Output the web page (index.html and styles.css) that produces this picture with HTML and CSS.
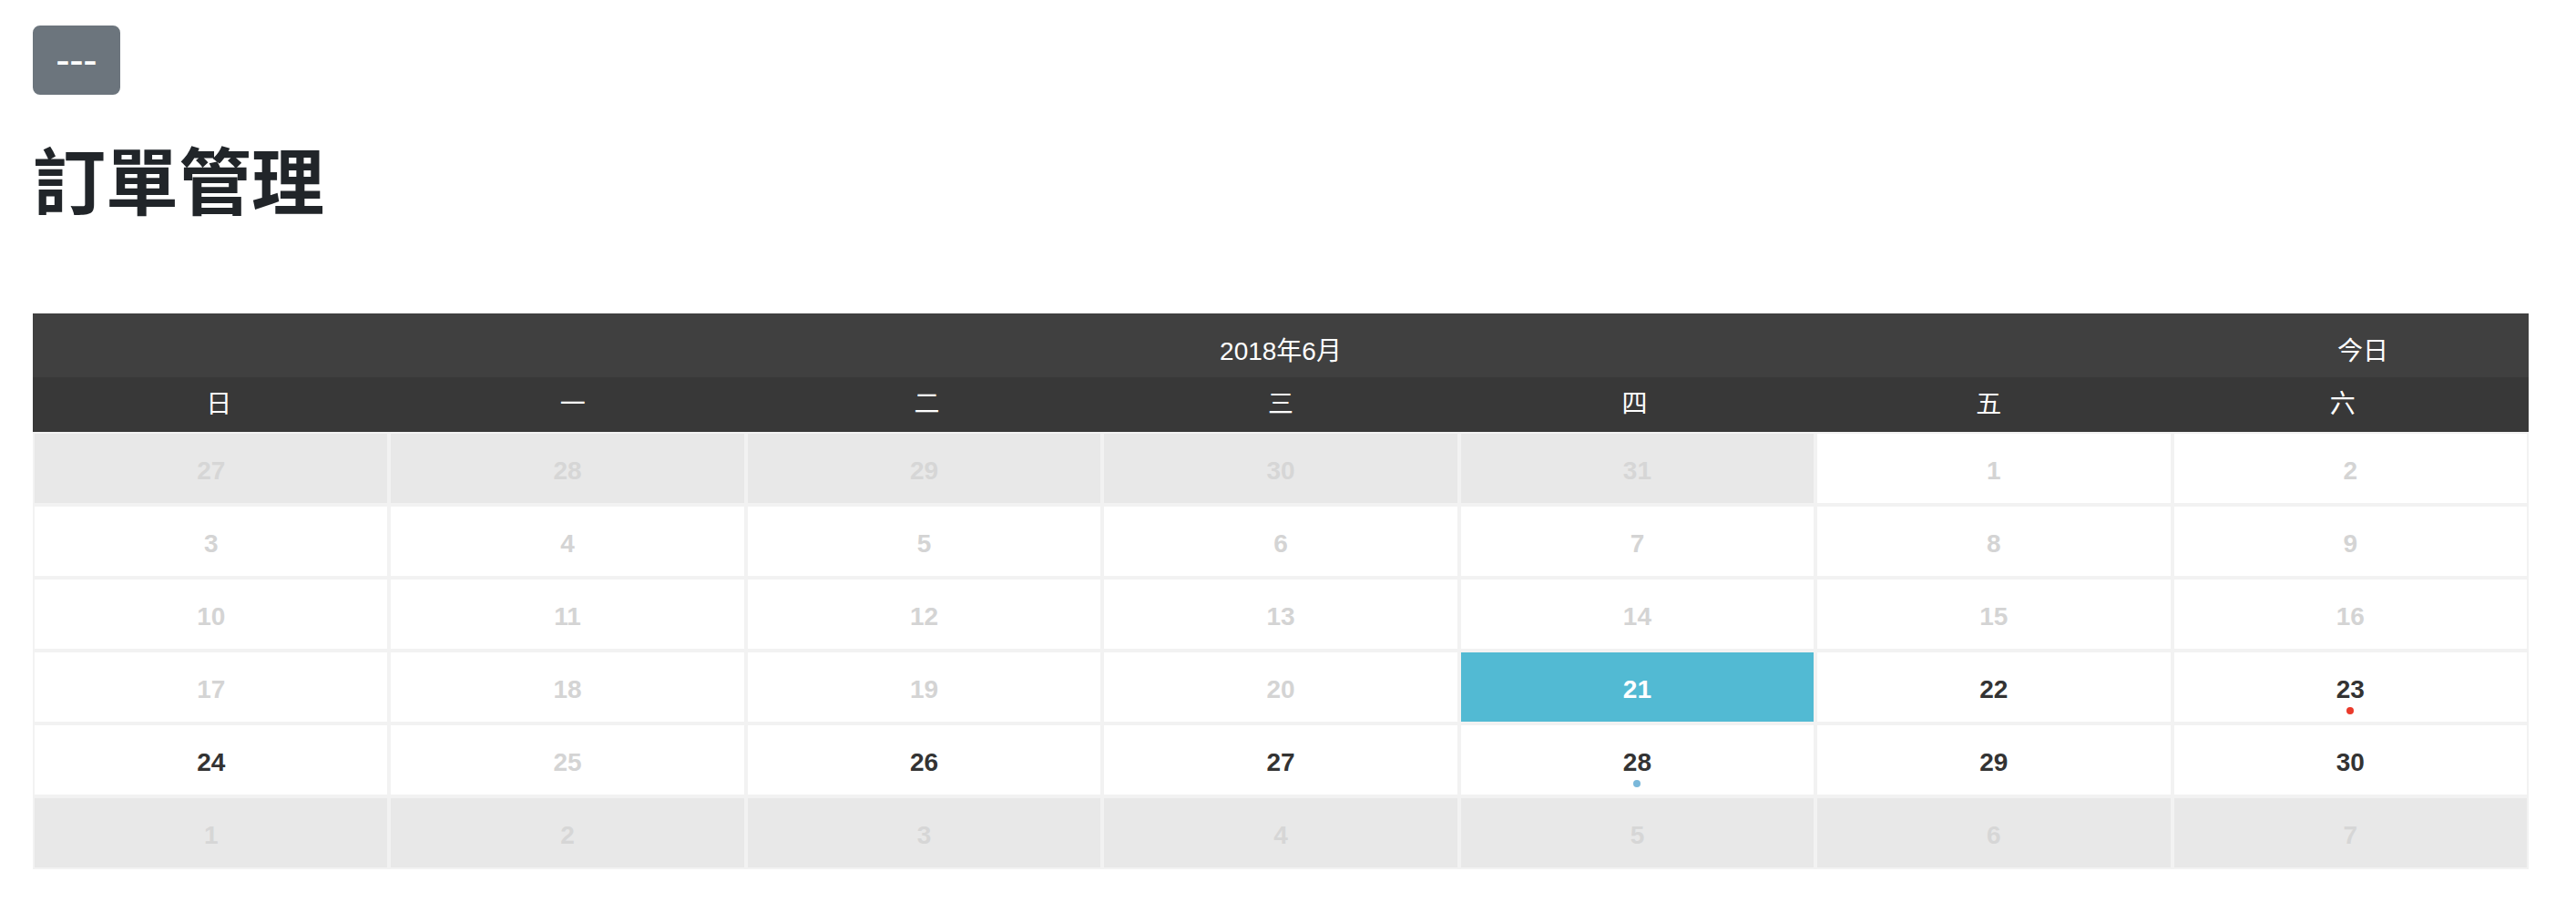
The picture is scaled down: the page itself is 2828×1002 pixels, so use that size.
FILE: index.html
```html
<!DOCTYPE html>
<html lang="zh-Hant">
<head>
<meta charset="utf-8">
<title>訂單管理</title>
<link rel="stylesheet" href="styles.css">
</head>
<body>
<div class="page">
  <button class="btn"><span class="btn-label">---</span></button>
  <h1 class="title">訂單管理</h1>
  <div class="calendar">
    <div class="cal-header">
      <span class="cal-spacer"></span>
      <span class="cal-title">2018年6月</span>
      <span class="cal-today">今日</span>
    </div>
    <div class="cal-weekdays">
      <span>日</span><span>一</span><span>二</span><span>三</span><span>四</span><span>五</span><span>六</span>
    </div>
    <div class="cal-body">
      <div class="day other">27</div>
      <div class="day other">28</div>
      <div class="day other">29</div>
      <div class="day other">30</div>
      <div class="day other">31</div>
      <div class="day past">1</div>
      <div class="day past">2</div>

      <div class="day past">3</div>
      <div class="day past">4</div>
      <div class="day past">5</div>
      <div class="day past">6</div>
      <div class="day past">7</div>
      <div class="day past">8</div>
      <div class="day past">9</div>

      <div class="day past">10</div>
      <div class="day past">11</div>
      <div class="day past">12</div>
      <div class="day past">13</div>
      <div class="day past">14</div>
      <div class="day past">15</div>
      <div class="day past">16</div>

      <div class="day past">17</div>
      <div class="day past">18</div>
      <div class="day past">19</div>
      <div class="day past">20</div>
      <div class="day today">21</div>
      <div class="day">22</div>
      <div class="day">23<span class="dot dot-red"></span></div>

      <div class="day">24</div>
      <div class="day past">25</div>
      <div class="day">26</div>
      <div class="day">27</div>
      <div class="day">28<span class="dot dot-blue"></span></div>
      <div class="day">29</div>
      <div class="day">30</div>

      <div class="day other">1</div>
      <div class="day other">2</div>
      <div class="day other">3</div>
      <div class="day other">4</div>
      <div class="day other">5</div>
      <div class="day other">6</div>
      <div class="day other">7</div>
    </div>
  </div>
</div>
</body>
</html>
```

FILE: styles.css
```css
html, body {
  margin: 0;
  padding: 0;
  background: #ffffff;
}

body {
  font-family: "Liberation Sans", "Noto Sans CJK TC", sans-serif;
  color: #212529;
}

.page {
  padding: 28px 0 0 36px;
}

.btn {
  display: block;
  margin: 0;
  padding: 12px 24px;
  background: #6c757d;
  border: 2px solid #6c757d;
  border-radius: 8px;
  color: #ffffff;
  font-family: "Liberation Sans", sans-serif;
  font-size: 32px;
  font-weight: 700;
  line-height: 48px;
}

.btn-label {
  display: inline-block;
  width: 44px;
  text-align: center;
  transform: scaleX(1.4);
}

.title {
  margin: 42px 0 0;
  font-family: "Noto Sans CJK TC", sans-serif;
  font-weight: 700;
  font-size: 80px;
  line-height: 96px;
  color: #212529;
}

.calendar {
  width: 2740px;
  margin-top: 102px;
}

.cal-header {
  display: grid;
  grid-template-columns: 1fr auto 1fr;
  align-items: start;
  height: 70px;
  box-sizing: border-box;
  padding-top: 14px;
  background: #404040;
  color: #ffffff;
  font-size: 28px;
  line-height: 56px;
}

.cal-today {
  justify-self: end;
  padding-right: 154px;
}

.cal-weekdays {
  display: grid;
  grid-template-columns: repeat(7, 1fr);
  padding: 0 10px;
  height: 60px;
  background: #383838;
  color: #ffffff;
  font-size: 28px;
  line-height: 60px;
  text-align: center;
}

.cal-body {
  display: grid;
  grid-template-columns: repeat(7, 1fr);
}

.day {
  position: relative;
  box-sizing: border-box;
  height: 80px;
  border: 2px solid #f2f2f2;
  padding-top: 5px;
  display: flex;
  align-items: center;
  justify-content: center;
  background: #ffffff;
  color: #333333;
  font-weight: 700;
  font-size: 28px;
}

.day.past {
  color: #d4d4d4;
}

.day.other {
  background: #e8e8e8;
  color: #d6d6d6;
}

.day.today {
  background: #52bad3;
  color: #ffffff;
}

.dot {
  position: absolute;
  top: 60px;
  left: 50%;
  width: 8px;
  height: 8px;
  margin-left: -4px;
  border-radius: 50%;
}

.dot-red {
  background: #ea3a2b;
}

.dot-blue {
  background: #7ab8da;
}
```
